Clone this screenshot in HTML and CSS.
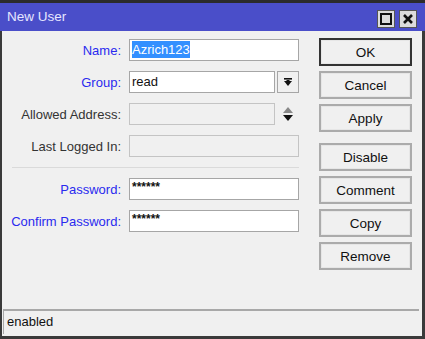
FILE: index.html
```html
<!DOCTYPE html>
<html lang="en">
<head>
  <meta charset="UTF-8" />
  <title>New User</title>
  <link rel="stylesheet" href="styles.css">
</head>
<body>
  <div class="window">
    <div class="title-bar">
      <span class="title">New User</span>
      <div class="title-buttons">
        <div class="tbtn">
          <svg width="12" height="12" viewBox="0 0 12 12"><rect x="1" y="1" width="10" height="10" fill="none" stroke="#111" stroke-width="2"/></svg>
        </div>
        <div class="tbtn">
          <svg width="12" height="12" viewBox="0 0 12 12"><path d="M2 2 L10 10 M10 2 L2 10" stroke="#111" stroke-width="2.6"/></svg>
        </div>
      </div>
    </div>

    <div class="content">
      <div class="form">
        <label class="lbl blue">Name:</label>
        <div class="field"><span class="selected">Azrich123</span></div>

        <label class="lbl blue">Group:</label>
        <div class="combo">
          <div class="field">read</div>
          <div class="drop">
            <svg width="10" height="10" viewBox="0 0 10 10"><rect x="1" y="1" width="8" height="1.6" fill="#111"/><path d="M1 4 H9 L5 9 Z" fill="#111"/><rect x="3.5" y="3" width="3" height="2" fill="#111"/></svg>
          </div>
        </div>

        <label class="lbl">Allowed Address:</label>
        <div class="combo">
          <div class="field disabled"></div>
          <div class="spin">
            <svg width="12" height="16" viewBox="0 0 12 16"><path d="M1 7 L6 1 L11 7 Z" fill="#888"/><path d="M1 9 L6 15 L11 9 Z" fill="#111"/></svg>
          </div>
        </div>

        <label class="lbl">Last Logged In:</label>
        <div class="field disabled"></div>

        <div class="sep"></div>

        <label class="lbl blue">Password:</label>
        <div class="field pw">******</div>

        <label class="lbl blue">Confirm Password:</label>
        <div class="field pw">******</div>
      </div>

      <div class="buttons">
        <button class="btn default">OK</button>
        <button class="btn">Cancel</button>
        <button class="btn">Apply</button>
        <button class="btn spaced">Disable</button>
        <button class="btn">Comment</button>
        <button class="btn">Copy</button>
        <button class="btn">Remove</button>
      </div>
    </div>

    <div class="status">enabled</div>
  </div>
</body>
</html>
```

FILE: styles.css
```css
body {
  margin: 0;
  padding: 0;
  background-color: #2b2b2b;
  font-family: 'Liberation Sans', Arial, sans-serif;
  font-size: 12px;
  color: #222;
}

.window {
  margin-top: 3px;
  height: 333px;
  background-color: #f0f0f0;
  border-left: 2px solid #3a3a3a;
  border-right: 3px solid #3a3a3a;
  border-bottom: 3px solid #3a3a3a;
  display: flex;
  flex-direction: column;
}

.title-bar {
  height: 28px;
  background-color: #4a4ec9;
  margin-left: -2px;
  margin-right: -3px;
  display: flex;
  align-items: center;
  justify-content: space-between;
  padding: 0 8px 0 7px;
}

.title {
  color: #e6e6ff;
  font-size: 13.5px;
  margin-top: -1px;
}

.title-buttons {
  display: flex;
  gap: 4px;
  margin-top: 4px;
}

.tbtn {
  width: 16px;
  height: 16px;
  background-color: #dcdcdc;
  border: 1px solid #555;
  display: flex;
  align-items: center;
  justify-content: center;
}

.content {
  display: flex;
  padding-top: 8px;
}

.form {
  display: grid;
  grid-template-columns: 119px 170px;
  column-gap: 8px;
  row-gap: 10px;
  align-items: center;
  align-content: start;
}

.lbl {
  text-align: right;
  color: #333;
  font-size: 13px;
}

.lbl.blue {
  color: #2a2aef;
}

.field {
  height: 20px;
  box-sizing: content-box;
  border: 1px solid #a6a6a6;
  background-color: #fff;
  line-height: 20px;
  padding: 0 2px;
  font-size: 13px;
  color: #111;
}

.field.disabled {
  background-color: #f0f0f0;
  border-color: #c4c4c4;
}

.field.pw {
  font-size: 12px;
  line-height: 16px;
  font-weight: bold;
}

.selected {
  background-color: #3390ff;
  color: #fff;
  padding: 1px 0;
}

.combo {
  display: flex;
  gap: 2px;
}

.combo .field {
  flex: 1;
}

.drop {
  width: 20px;
  height: 20px;
  border: 1px solid #a6a6a6;
  background-color: #f0f0f0;
  display: flex;
  align-items: center;
  justify-content: center;
}

.spin {
  width: 22px;
  display: flex;
  align-items: center;
  justify-content: center;
}

.sep {
  grid-column: 1 / -1;
  margin-left: 10px;
  border-top: 1px solid #dadada;
  height: 0;
}

.buttons {
  display: flex;
  flex-direction: column;
  gap: 5px;
  margin-left: 20px;
  margin-top: -1px;
}

.btn {
  width: 93px;
  height: 28px;
  background-color: #f0f0f0;
  border: 2px solid #ababab;
  outline: 1px solid #e6e6e6;
  outline-offset: -3px;
  font-family: 'Liberation Sans', Arial, sans-serif;
  font-size: 13.5px;
  color: #111;
  padding: 0;
}

.btn.default {
  border-color: #333;
}

.btn.spaced {
  margin-top: 6px;
}

.status {
  margin-top: auto;
  margin-left: 1px;
  margin-right: 3px;
  margin-bottom: 2px;
  height: 23px;
  border-top: 2px solid #a8a8a8;
  border-left: 1px solid #a8a8a8;
  line-height: 21px;
  padding-left: 3px;
  font-size: 13px;
  color: #111;
}
```
